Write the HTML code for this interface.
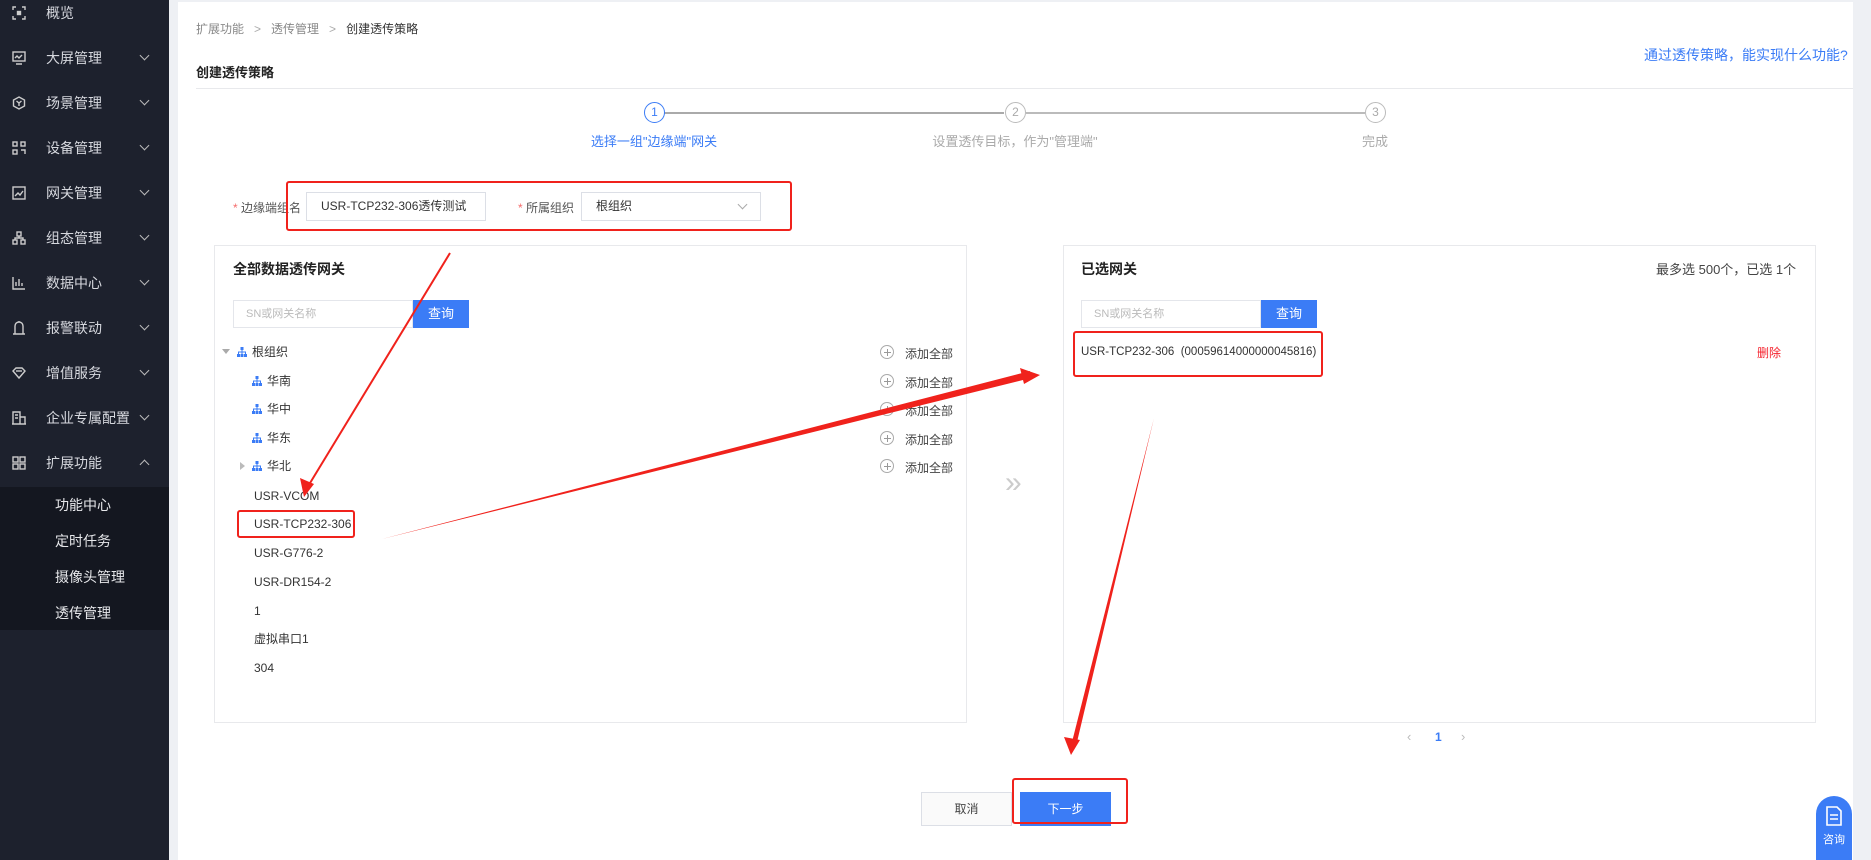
<!DOCTYPE html>
<html><head><meta charset="utf-8">
<style>
*{margin:0;padding:0;box-sizing:border-box}
body{width:1871px;height:860px;overflow:hidden;background:#eef0f4;font-family:"Liberation Sans","Noto Sans CJK SC",sans-serif;font-size:12px;color:#333;position:relative}
.abs{position:absolute}
#side{left:0;top:0;width:169px;height:860px;background:#1d212d}
.mi{position:absolute;left:0;width:169px;height:45px;color:#d6d8de;font-size:14px;line-height:26px}
.mi .ic{position:absolute;left:12px;top:6px;width:14px;height:14px}
.mi .tx{position:absolute;left:46px;top:0}
.mi .ch{position:absolute;left:141px;top:7px;width:7px;height:7px;border-right:1.3px solid #bbb;border-bottom:1.3px solid #bbb;transform:rotate(45deg)}
#sub{left:0;top:487px;width:169px;height:143px;background:#141720}
.si{position:absolute;left:55px;color:#e6e7ea;font-size:14px}
#main{left:178px;top:2px;width:1675px;height:858px;background:#fff}
.panel{position:absolute;border:1px solid #e8e9ec;background:#fff}
.t14b{font-size:14px;font-weight:bold;color:#222}
.row{position:absolute;font-size:12px;color:#333;line-height:16px}
.plus{position:absolute;width:14px;height:14px;border:1px solid #aaa;border-radius:50%}
.plus:before{content:"";position:absolute;left:2.5px;top:5.5px;width:7px;height:1px;background:#999}
.plus:after{content:"";position:absolute;left:5.5px;top:2.5px;width:1px;height:7px;background:#999}
.add{position:absolute;left:905px;font-size:12px;color:#444}
.org{position:absolute;width:10px;height:10px}
.red{position:absolute;border:2.5px solid #f0221c;border-radius:3px}
</style></head><body>
<div id="side" class="abs">
 <div class="mi" style="top:0"><svg class="ic" viewBox="0 0 14 14" fill="none" stroke="#ccc" stroke-width="1.4"><path d="M1 4V1h3M10 1h3v3M13 10v3h-3M4 13H1v-3"/><rect x="5.5" y="5.5" width="3" height="3" fill="#ccc"/></svg><span class="tx">概览</span></div>
 <div class="mi" style="top:45px"><svg class="ic" viewBox="0 0 14 14" fill="none" stroke="#ccc" stroke-width="1.4"><rect x="1" y="1" width="12" height="9"/><path d="M3 7l2-2 2 2 3-3M4 13h6"/></svg><span class="tx">大屏管理</span><i class="ch"></i></div>
 <div class="mi" style="top:90px"><svg class="ic" viewBox="0 0 14 14" fill="none" stroke="#ccc" stroke-width="1.4"><path d="M7 1l5.5 3v6L7 13 1.5 10V4z"/><path d="M4.5 5L7 7l2.5-2M7 7v3"/></svg><span class="tx">场景管理</span><i class="ch"></i></div>
 <div class="mi" style="top:135px"><svg class="ic" viewBox="0 0 14 14" fill="none" stroke="#ccc" stroke-width="1.4"><rect x="1" y="1" width="4" height="4"/><rect x="9" y="1" width="4" height="4"/><rect x="1" y="9" width="4" height="4"/><path d="M9 9h4v4"/></svg><span class="tx">设备管理</span><i class="ch"></i></div>
 <div class="mi" style="top:180px"><svg class="ic" viewBox="0 0 14 14" fill="none" stroke="#ccc" stroke-width="1.4"><rect x="1" y="1" width="12" height="12"/><path d="M3 10l3-3 2 2 3-4"/></svg><span class="tx">网关管理</span><i class="ch"></i></div>
 <div class="mi" style="top:225px"><svg class="ic" viewBox="0 0 14 14" fill="none" stroke="#ccc" stroke-width="1.4"><rect x="5" y="1" width="4" height="4"/><rect x="1" y="9" width="4" height="4"/><rect x="9" y="9" width="4" height="4"/><path d="M7 5v2M3 9V7h8v2"/></svg><span class="tx">组态管理</span><i class="ch"></i></div>
 <div class="mi" style="top:270px"><svg class="ic" viewBox="0 0 14 14" fill="none" stroke="#ccc" stroke-width="1.4"><path d="M1 1v12h12M4 10V6M7 10V3M10 10V7"/></svg><span class="tx">数据中心</span><i class="ch"></i></div>
 <div class="mi" style="top:315px"><svg class="ic" viewBox="0 0 14 14" fill="none" stroke="#ccc" stroke-width="1.4"><path d="M3 13V5a4 4 0 018 0v8M1 13h12M7 1V0"/></svg><span class="tx">报警联动</span><i class="ch"></i></div>
 <div class="mi" style="top:360px"><svg class="ic" viewBox="0 0 14 14" fill="none" stroke="#ccc" stroke-width="1.4"><path d="M1 5l3-3h6l3 3-6 7z"/><path d="M4 5h6"/></svg><span class="tx">增值服务</span><i class="ch"></i></div>
 <div class="mi" style="top:405px"><svg class="ic" viewBox="0 0 14 14" fill="none" stroke="#ccc" stroke-width="1.4"><path d="M1 13V1h7v12M8 6h5v7M0 13h14M3 4h3M3 7h3"/></svg><span class="tx">企业专属配置</span><i class="ch"></i></div>
 <div class="mi" style="top:450px"><svg class="ic" viewBox="0 0 14 14" fill="none" stroke="#ccc" stroke-width="1.4"><rect x="1" y="1" width="5" height="5"/><rect x="8" y="1" width="5" height="5"/><rect x="1" y="8" width="5" height="5"/><rect x="8" y="8" width="5" height="5"/></svg><span class="tx">扩展功能</span><i class="ch" style="transform:rotate(225deg);top:11px"></i></div>
</div>
<div id="sub" class="abs">
 <div class="si" style="top:8px">功能中心</div>
 <div class="si" style="top:44px">定时任务</div>
 <div class="si" style="top:80px">摄像头管理</div>
 <div class="si" style="top:116px">透传管理</div>
</div>
<div id="main" class="abs"></div>
<div class="abs" style="left:196px;top:20px;font-size:12px;color:#888">扩展功能 &nbsp;&nbsp;<span style="color:#aaa">&gt;</span>&nbsp;&nbsp; 透传管理 &nbsp;&nbsp;<span style="color:#aaa">&gt;</span>&nbsp;&nbsp; <span style="color:#333">创建透传策略</span></div>
<div class="abs" style="left:196px;top:62px;font-size:13px;font-weight:bold;color:#222">创建透传策略</div>
<div class="abs" style="left:196px;top:88px;width:1657px;height:1px;background:#e8e9ec"></div>
<div class="abs" style="left:1644px;top:45px;font-size:14px;color:#3b7cf6">通过透传策略，能实现什么功能?</div>
<div class="abs" style="left:664px;top:112px;width:340px;height:1.5px;background:#aaa"></div>
<div class="abs" style="left:1026px;top:112px;width:339px;height:1.5px;background:#bbb"></div>
<div class="abs" style="left:644px;top:102px;width:21px;height:21px;border:1.3px solid #3b7cf6;border-radius:50%;color:#3b7cf6;text-align:center;line-height:18px;font-size:12px">1</div>
<div class="abs" style="left:1005px;top:102px;width:21px;height:21px;border:1.3px solid #bbb;border-radius:50%;color:#aaa;text-align:center;line-height:18px;font-size:12px">2</div>
<div class="abs" style="left:1365px;top:102px;width:21px;height:21px;border:1.3px solid #bbb;border-radius:50%;color:#aaa;text-align:center;line-height:18px;font-size:12px">3</div>
<div class="abs" style="left:554px;top:131px;width:200px;text-align:center;font-size:13px;color:#3b7cf6">选择一组"边缘端"网关</div>
<div class="abs" style="left:895px;top:131px;width:240px;text-align:center;font-size:13px;color:#aaa">设置透传目标，作为"管理端"</div>
<div class="abs" style="left:1335px;top:131px;width:80px;text-align:center;font-size:13px;color:#aaa">完成</div>
<div class="abs" style="left:233px;top:199px;font-size:12px;color:#555"><span style="color:#f56c6c">*</span> 边缘端组名</div>
<div class="abs" style="left:306px;top:192px;width:180px;height:29px;border:1px solid #dcdfe6;padding-left:14px;line-height:27px;font-size:12px;color:#333">USR-TCP232-306透传测试</div>
<div class="abs" style="left:518px;top:199px;font-size:12px;color:#555"><span style="color:#f56c6c">*</span> 所属组织</div>
<div class="abs" style="left:581px;top:192px;width:180px;height:29px;border:1px solid #dcdfe6;padding-left:14px;line-height:27px;font-size:12px;color:#333">根组织<i style="position:absolute;right:14px;top:8px;width:7px;height:7px;border-right:1px solid #aaa;border-bottom:1px solid #aaa;transform:rotate(45deg)"></i></div>
<div class="red" style="left:286px;top:181px;width:506px;height:50px"></div>
<div class="panel" style="left:214px;top:245px;width:753px;height:478px"></div>
<div class="abs t14b" style="left:233px;top:259px">全部数据透传网关</div>
<div class="abs" style="left:233px;top:300px;width:180px;height:28px;border:1px solid #e4e6eb;padding-left:12px;line-height:26px;color:#bbb;font-size:11px">SN或网关名称</div>
<div class="abs" style="left:413px;top:300px;width:56px;height:28px;background:#3b7cf6;color:#fff;text-align:center;line-height:28px;font-size:13px">查询</div>
<svg class="abs" style="left:222px;top:348px" width="8" height="8"><path d="M0 1h8L4 6z" fill="#aaa"/></svg>
<div class="row" style="left:252px;top:344px">根组织</div>
<div class="row" style="left:267px;top:373px">华南</div>
<div class="row" style="left:267px;top:401px">华中</div>
<div class="row" style="left:267px;top:430px">华东</div>
<svg class="abs" style="left:240px;top:462px" width="6" height="8"><path d="M0 0v8l5-4z" fill="#bbb"/></svg>
<div class="row" style="left:267px;top:458px">华北</div>
<svg width="0" height="0" style="position:absolute"><defs><g id="o"><rect x="3.5" y="0" width="3" height="3" fill="#3b7cf6"/><rect x="0" y="7" width="3" height="3" fill="#3b7cf6"/><rect x="3.5" y="7" width="3" height="3" fill="#3b7cf6"/><rect x="7" y="7" width="3" height="3" fill="#3b7cf6"/><path d="M5 3v4M1.5 7V5h7v2" stroke="#3b7cf6" fill="none"/></g></defs></svg>
<svg class="org" style="left:237px;top:347px"><use href="#o"/></svg>
<svg class="org" style="left:252px;top:376px"><use href="#o"/></svg>
<svg class="org" style="left:252px;top:404px"><use href="#o"/></svg>
<svg class="org" style="left:252px;top:433px"><use href="#o"/></svg>
<svg class="org" style="left:252px;top:461px"><use href="#o"/></svg>
<div class="plus" style="left:880px;top:345px"></div><div class="add" style="top:345px">添加全部</div>
<div class="plus" style="left:880px;top:374px"></div><div class="add" style="top:374px">添加全部</div>
<div class="plus" style="left:880px;top:402px"></div><div class="add" style="top:402px">添加全部</div>
<div class="plus" style="left:880px;top:431px"></div><div class="add" style="top:431px">添加全部</div>
<div class="plus" style="left:880px;top:459px"></div><div class="add" style="top:459px">添加全部</div>
<div class="row" style="left:254px;top:488px">USR-VCOM</div>
<div class="row" style="left:254px;top:516px">USR-TCP232-306</div>
<div class="row" style="left:254px;top:545px">USR-G776-2</div>
<div class="row" style="left:254px;top:574px">USR-DR154-2</div>
<div class="row" style="left:254px;top:603px">1</div>
<div class="row" style="left:254px;top:631px">虚拟串口1</div>
<div class="row" style="left:254px;top:660px">304</div>
<div class="red" style="left:237px;top:510px;width:118px;height:28px"></div>
<div class="abs" style="left:1005px;top:466px;font-size:30px;color:#ccc">»</div>
<div class="panel" style="left:1063px;top:245px;width:753px;height:478px"></div>
<div class="abs t14b" style="left:1081px;top:259px">已选网关</div>
<div class="abs" style="left:1656px;top:259px;font-size:13px;color:#444">最多选 500个，已选 1个</div>
<div class="abs" style="left:1081px;top:300px;width:180px;height:28px;border:1px solid #e4e6eb;padding-left:12px;line-height:26px;color:#bbb;font-size:11px">SN或网关名称</div>
<div class="abs" style="left:1261px;top:300px;width:56px;height:28px;background:#3b7cf6;color:#fff;text-align:center;line-height:28px;font-size:13px">查询</div>
<div class="row" style="left:1081px;top:344px;font-size:11.5px">USR-TCP232-306 &nbsp;(00059614000000045816)</div>
<div class="row" style="left:1757px;top:345px;color:#f5222d">删除</div>
<div class="red" style="left:1073px;top:331px;width:250px;height:46px"></div>
<div class="abs" style="left:1407px;top:729px;color:#bbb;font-size:13px">‹</div>
<div class="abs" style="left:1435px;top:730px;color:#3b7cf6;font-size:12px;font-weight:bold">1</div>
<div class="abs" style="left:1461px;top:729px;color:#bbb;font-size:13px">›</div>
<div class="abs" style="left:921px;top:792px;width:91px;height:34px;border:1px solid #dcdfe6;background:#fafafa;text-align:center;line-height:32px;font-size:12px;color:#444">取消</div>
<div class="abs" style="left:1020px;top:792px;width:91px;height:34px;background:#3b7cf6;text-align:center;line-height:34px;font-size:12px;color:#fff">下一步</div>
<div class="red" style="left:1012px;top:778px;width:116px;height:46px"></div>
<div class="abs" style="left:1816px;top:796px;width:36px;height:64px;background:#3b7cf6;border-radius:18px 18px 0 0;color:#fff;font-size:11px;text-align:center">
<svg style="margin-top:10px" width="18" height="20" viewBox="0 0 18 20" fill="none" stroke="#fff" stroke-width="1.6"><path d="M2 1h10l4 4v14H2z"/><path d="M5 9h8M5 13h8"/></svg><div style="margin-top:2px">咨询</div></div>
<svg class="abs" style="left:0;top:0" width="1871" height="860">
<path d="M450 253 L307 488" stroke="#f0221c" stroke-width="2"/>
<polygon points="304,497 300,478 314,484" fill="#f0221c"/>
<polygon points="382,539 1030,371 1031,378" fill="#f0221c"/>
<polygon points="1040,375 1020,368 1024,384" fill="#f0221c"/>
<polygon points="1154,418 1072,742 1077,742" fill="#f0221c"/>
<polygon points="1071,755 1064,737 1080,740" fill="#f0221c"/>
</svg>
</body></html>
